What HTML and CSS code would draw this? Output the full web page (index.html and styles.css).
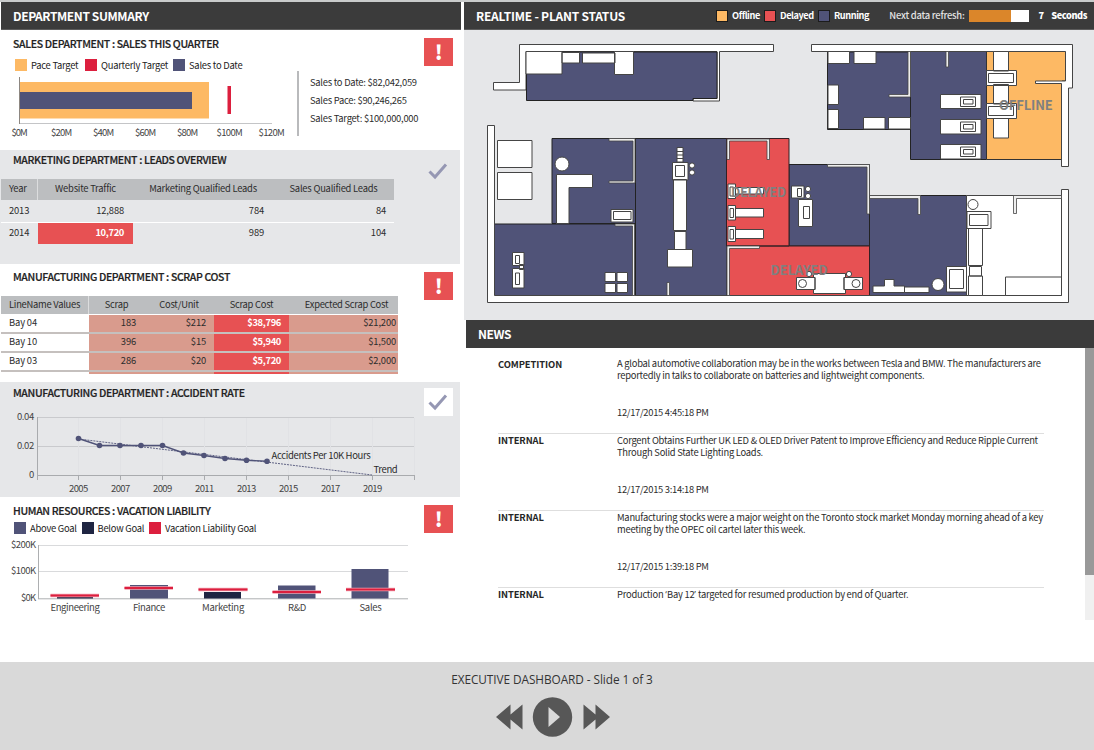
FILE: index.html
```
<!DOCTYPE html>
<html lang="en">
<head>
<meta charset="utf-8">
<title>Executive Dashboard</title>
<link rel="stylesheet" href="styles.css">
</head>
<body>
<div class="page">
<main class="board">
<div class="left">
  <h1 class="bar">DEPARTMENT SUMMARY</h1>

  <section class="panel sales">
    <h2>SALES DEPARTMENT : SALES THIS QUARTER</h2>
    <span class="flag alert">!</span>
    <div class="legend">
      <i class="sw orange"></i><span class="w49">Pace Target</span>
      <i class="sw crimson"></i><span class="w68">Quarterly Target</span>
      <i class="sw navy"></i><span>Sales to Date</span>
    </div>
    <div class="sales-body">
      <svg class="chart" width="297" height="70" viewBox="0 72 297 70">
        <path d="M19.500 77V124M19 123.500H272" stroke="#c4c5c7" fill="none"/>
        <rect x="20" y="82" width="189" height="36.500" fill="#fdb964"/>
        <rect x="20" y="92" width="172" height="17" fill="#505378"/>
        <path d="M19.500 77V124" stroke="#8d8781"/>
        <rect x="227.500" y="86" width="3.500" height="28" fill="#dc1f3e"/>
        <g class="axis mid">
          <text x="19.500" y="136" textLength="16">$0M</text><text x="61.500" y="136" textLength="21">$20M</text><text x="103.500" y="136" textLength="21">$40M</text><text x="145.500" y="136" textLength="21">$60M</text><text x="187.500" y="136" textLength="21">$80M</text><text x="229.500" y="136" textLength="26">$100M</text><text x="271.500" y="136" textLength="26">$120M</text>
        </g>
      </svg>
      <ul class="stats"><li>Sales to Date: $82,042,059</li><li>Sales Pace: $90,246,265</li><li>Sales Target: $100,000,000</li></ul>
    </div>
  </section>

  <section class="panel gray leads">
    <h2>MARKETING DEPARTMENT : LEADS OVERVIEW</h2>
    <span class="flag"><svg width="20" height="18" viewBox="0 0 20 18"><path d="M1.500 8.500L7 14L18 1.500" class="tick"/></svg></span>
    <div class="tbl">
      <div class="row head"><span>Year</span><span>Website Traffic</span><span>Marketing Qualified Leads</span><span>Sales Qualified Leads</span></div>
      <div class="row"><span>2013</span><span>12,888</span><span>784</span><span>84</span></div>
      <div class="row"><span>2014</span><span class="hot">10,720</span><span>989</span><span>104</span></div>
    </div>
  </section>

  <section class="panel scrap">
    <h2>MANUFACTURING DEPARTMENT : SCRAP COST</h2>
    <span class="flag alert">!</span>
    <div class="tbl">
      <div class="row head"><span>LineName Values</span><span>Scrap</span><span>Cost/Unit</span><span>Scrap Cost</span><span>Expected Scrap Cost</span></div>
      <div class="row"><span>Bay 04</span><span>183</span><span>$212</span><span class="hot">$38,796</span><span>$21,200</span></div>
      <div class="row"><span>Bay 10</span><span>396</span><span>$15</span><span class="hot">$5,940</span><span>$1,500</span></div>
      <div class="row"><span>Bay 03</span><span>286</span><span>$20</span><span class="hot">$5,720</span><span>$2,000</span></div>
      <div class="row stub"><span></span><span></span><span></span><span class="hot"></span><span></span></div>
    </div>
  </section>

  <section class="panel gray accidents">
    <h2>MANUFACTURING DEPARTMENT : ACCIDENT RATE</h2>
    <span class="flag white"><svg width="20" height="18" viewBox="0 0 20 18"><path d="M1.500 8.500L7 14L18 1.500" class="tick"/></svg></span>
    <svg class="chart" width="460" height="92" viewBox="0 405 460 92">
      <path d="M37 417.500H414M37 446.500H414" stroke="#c9cacd"/>
      <path d="M78.500 418V475M120.500 418V475M162.500 418V475M204.500 418V475M246.500 418V475M288.500 418V475M330.500 418V475M372.500 418V475M414.500 418V475" stroke="#e1e2e5"/>
      <path d="M37.500 417V480M37 475.500H415M78.500 475V480M120.500 475V480M162.500 475V480M204.500 475V480M246.500 475V480M288.500 475V480M330.500 475V480M372.500 475V480M414.500 475V480" stroke="#a9abae" fill="none"/>
      <path d="M78.500 439L372 475" stroke="#505378" stroke-dasharray="2 1" stroke-width=".9"/>
      <path d="M78.500 438.500L99.500 445.500H162.500L183.500 453L204 455.500L225 458.500L246.500 460.300L267 461.300" fill="none" stroke="#505378" stroke-width="1.400"/>
      <g fill="#505378"><circle cx="78.500" cy="438.500" r="2.800"/><circle cx="99.500" cy="445.500" r="2.800"/><circle cx="120" cy="445.500" r="2.800"/><circle cx="141" cy="445.500" r="2.800"/><circle cx="162.500" cy="445.500" r="2.800"/><circle cx="183.500" cy="453" r="2.800"/><circle cx="204" cy="455.500" r="2.800"/><circle cx="225" cy="458.500" r="2.800"/><circle cx="246.500" cy="460.300" r="2.800"/><circle cx="267" cy="461.300" r="2.800"/></g>
      <g class="axis end"><text x="34" y="420" textLength="17">0.04</text><text x="34" y="449" textLength="17">0.02</text><text x="34" y="478">0</text></g>
      <g class="axis mid"><text x="78.500" y="492" textLength="19">2005</text><text x="120.500" y="492" textLength="19">2007</text><text x="162.500" y="492" textLength="19">2009</text><text x="204.500" y="492" textLength="19">2011</text><text x="246.500" y="492" textLength="19">2013</text><text x="288.500" y="492" textLength="19">2015</text><text x="330.500" y="492" textLength="19">2017</text><text x="372.500" y="492" textLength="19">2019</text></g>
      <g class="label"><text x="271.500" y="459" textLength="99">Accidents Per 10K Hours</text><text x="373.500" y="473" textLength="24">Trend</text></g>
    </svg>
  </section>

  <section class="panel vacation">
    <h2>HUMAN RESOURCES : VACATION LIABILITY</h2>
    <span class="flag alert">!</span>
    <div class="legend">
      <i class="sw navy"></i><span class="w46">Above Goal</span>
      <i class="sw dark"></i><span class="w46">Below Goal</span>
      <i class="sw crimson"></i><span>Vacation Liability Goal</span>
    </div>
    <svg class="chart" width="460" height="86" viewBox="0 536 460 86">
      <path d="M39 545.500H408M39 571.500H408" stroke="#d9dadc"/>
      <path d="M38.500 545V599M38 598.800H408" stroke="#adafb1" fill="none"/>
      <rect x="57" y="596" width="36" height="2.500" fill="#1f2542"/><rect x="130" y="585" width="38" height="13.500" fill="#505378"/><rect x="204" y="592" width="37" height="6.500" fill="#1f2542"/><rect x="278" y="585.500" width="37.500" height="13" fill="#505378"/><rect x="351.500" y="569" width="37" height="29.500" fill="#505378"/>
      <g stroke="#f3a0ae" stroke-width="3.400"><path d="M50.500 595.500H99M124.500 588H173M198.500 589.500H247.500M272.500 592H321M346 589.500H395"/></g>
      <g stroke="#dc1f3e" stroke-width="2"><path d="M50.500 595.500H99M124.500 588H173M198.500 589.500H247.500M272.500 592H321M346 589.500H395"/></g>
      <g class="axis end"><text x="36" y="548" textLength="25">$200K</text><text x="36" y="574" textLength="25">$100K</text><text x="36" y="601" textLength="15">$0K</text></g>
      <g class="axis mid"><text x="75" y="611" textLength="49">Engineering</text><text x="149" y="611" textLength="32">Finance</text><text x="223" y="611" textLength="42">Marketing</text><text x="297" y="611" textLength="18">R&amp;D</text><text x="370.500" y="611" textLength="22">Sales</text></g>
    </svg>
  </section>
</div>

<div class="right">
  <header class="bar status">
    <h1>REALTIME - PLANT STATUS</h1>
    <div class="keys"><i class="sw orange"></i><span class="k1">Offline</span><i class="sw red"></i><span class="k2">Delayed</span><i class="sw navy"></i><span>Running</span></div>
    <div class="refresh"><span class="nd">Next data refresh:</span><span class="meter"><i style="width:70%"></i></span><b>7</b><b class="sec">Seconds</b></div>
  </header>
  <svg class="plan" width="630" height="290" viewBox="464 30 630 290">
    <!-- upper left building -->
    <path class="wall" d="M519.500 44.500H773.500V51.500H719.500V101H693V98.500H717V51.500H526V90H493.500V82.500H519.500Z"/>
    <path class="run" d="M526.500 52H717V98.500H693V100.500H526.500Z"/>
    <g class="eq"><path d="M526 51.500H562V74H526ZM562 52.500H579.500V63H562ZM582.500 53H615V63H582.500ZM614.500 51.500H633.500V74.500H614.500Z"/></g>
    <!-- upper right building -->
    <path class="run" d="M827.500 52H910.500V129.500H827.500ZM910.500 51H986.500V159.500H910.500Z"/>
    <path class="off" d="M986.500 51H1065.500V81H1062V159.500H986.500Z"/>
    <path class="wall" d="M811.500 44.500H1072.500V88H1068.500V166.500H1061.500V83.500H1035.500V81H1065.500V51.500H811.500Z"/>
    <path class="thin" d="M908 51.500H910.500V97H889V94.500H908ZM946 51.500H948.500V67H946Z"/>
    <g class="eq"><path d="M828 51.500H849.500V63.500H828ZM854 51.500H876V63.500H854ZM828 85H838.500V104.500H828ZM828 109.500H838.500V128.500H828ZM863.500 117.500H885V129H863.500ZM888.500 117.500H910.500V129H888.500Z"/>
    <path d="M940.500 94.500H981V108.500H940.500ZM960.500 97H975.500V106.500H960.500ZM963.500 99.500H973V104H963.500ZM940.500 119.500H981V134H940.500ZM960.500 122H975.500V131.500H960.500ZM963.500 124.500H973V129H963.500ZM940.500 144.500H981V159H940.500ZM960.500 147H975.500V156.500H960.500ZM963.500 149.500H973V154H963.500Z"/>
    <path d="M993.500 51.500H1008.500V71H993.500ZM993.500 84.500H1008.500V104H993.500ZM993.500 118.500H1008.500V138H993.500ZM986.500 70.500H1016.500V85.500H986.500ZM988.500 73.500H1013.500V82.500H988.500ZM986.500 103.500H1016.500V118.500H986.500ZM988.500 106.500H1013.500V115.500H988.500Z"/></g>
    <!-- lower building rooms -->
    <path class="run" d="M552 138.500H635.500V223.500H552ZM494.500 224H634V295.500H494.500ZM635.500 138.500H727V295.500H635.500ZM789 164.500H869.500V246H789ZM869.500 195.500H966.500V295.500H869.500Z"/>
    <path class="delay" d="M726.500 138.500H789V246H726.500ZM727.500 246H869.500V295.500H727.500Z"/>
    <path class="eq" d="M966.500 195.500H1061.500V295.500H966.500Z"/>
    <path class="wall" d="M487.500 125.500H494.500V295.500H1061.500V189.500H1068.500V302.500H487.500Z"/>
    <path class="thin" d="M609 138.500H635V183H609V181H633V141H609ZM615 224H634.500V295.500H632.500V226H615ZM667 282.500H669.500V295.500H667ZM727 139H769.500V159.500H767V141H729.500V159.500H727ZM827.500 164.500H869.500V214H867V167H827.500ZM727 246H759.500V248.500H729.500V295.500H727ZM869.500 195.500H920.500V214.500H918V198.500H869.500ZM1013.500 195.500H1061.500V198.500H1016.500V213.500H1013.500Z"/>
    <g class="eq">
      <path d="M497.500 140.500H532V167.500H497.500ZM497.500 172.500H532V199.500H497.500Z"/>
      <circle cx="562" cy="164" r="7"/>
      <path d="M556.500 174.500H592.500V187.500H569V223.500H556.500ZM611 209.500H633V222H611ZM613.500 211.500H631V219.500H613.500Z"/>
      <path d="M512.500 252.500H524V265.500H512.500ZM515.500 255.500H519.500V263.500H515.500ZM512.500 268.500H524V288H512.500ZM515.500 273H519.500V284.500H515.500ZM519.500 264.500H523.500V269.500H519.500Z"/>
      <path d="M605 272.500H615.500V281.500H605ZM617 272.500H627.500V281.500H617ZM605 283.500H615.500V292.500H605ZM617 283.500H627.500V292.500H617Z"/>
      <path d="M677 147.500H683V162H677ZM677 151.500H683M677 155H683M677 158.500H683M672.500 162.500H688V180H672.500ZM675.500 165.500H684.500V176.500H675.500ZM673.500 179.500H686.500V230.500H673.500ZM674.500 231.500H686V249.500H674.500ZM667.500 249.500H692.500V267H667.500Z"/>
      <circle cx="692" cy="165.500" r="2.600"/><circle cx="692" cy="172.500" r="2.600"/>
      <path d="M728 184H735.500V198.500H728ZM730 187H733.500V196H730ZM735.500 187.500H763.500V194H735.500ZM728 205.500H735.500V220H728ZM730 208.500H733.500V217.500H730ZM735.500 208.500H763.500V217H735.500ZM728 226.500H735.500V241.500H728ZM730 229.500H733.500V239H730ZM735.500 229.500H763.500V238.500H735.500Z"/>
      <path d="M791.500 186H804V198H791.500ZM797.500 188.500H801.500V196.500H797.500ZM798.500 199.500H812.500V226.500H798.500ZM803.500 206.500H809.500V218.500H803.500Z"/>
      <circle cx="808" cy="189" r="2.600"/><circle cx="808" cy="196" r="2.600"/>
      <path d="M796.500 277.500H815V289.500H796.500ZM844 277.500H862.500V289.500H844ZM813.500 273.500H845.500V277.500H844V289.500H845.500V293.500H813.500V289.500H815V277.500H813.500Z"/>
      <circle cx="802.500" cy="283.500" r="4"/><circle cx="856" cy="283.500" r="4"/><circle cx="809" cy="274" r="2.600"/><circle cx="849" cy="274" r="2.600"/>
      <path d="M873 286H884.500V279.500H894V286H904.500V292.500H873ZM904.500 287H929V292.500H904.500ZM946.500 266.500H966.500V292H946.500ZM949.500 269.500H963.500V288.500H949.500Z"/>
      <circle cx="938" cy="284.500" r="6"/><circle cx="973" cy="204.500" r="5"/>
      <path d="M967 211.500H991V228.500H967ZM969.500 214.500H988V225.500H969.500ZM968.500 228.500H982.500V265.500H968.500ZM969.500 266.500H981.500V276H969.500ZM968.500 276H982.500V295.500H968.500ZM1005.500 277H1061.500V295.500H1005.500Z"/>
    </g>
    <g class="tag"><text x="999" y="110" textLength="53.500">OFFLINE</text><text x="731" y="197" textLength="55">DELAYED</text><text x="770.500" y="275" textLength="57">DELAYED</text></g>
  </svg>

  <div class="news">
    <h1 class="bar">NEWS</h1>
    <div class="news-body">
      <div class="feed">
        <article><h3>COMPETITION</h3><div><p>A global automotive collaboration may be in the works between Tesla and BMW. The manufacturers are<br>reportedly in talks to collaborate on batteries and lightweight components.</p><time>12/17/2015 4:45:18 PM</time></div></article>
        <article><h3>INTERNAL</h3><div><p>Corgent Obtains Further UK LED &amp; OLED Driver Patent to Improve Efficiency and Reduce Ripple Current<br>Through Solid State Lighting Loads.</p><time>12/17/2015 3:14:18 PM</time></div></article>
        <article><h3>INTERNAL</h3><div><p>Manufacturing stocks were a major weight on the Toronto stock market Monday morning ahead of a key<br>meeting by the OPEC oil cartel later this week.</p><time>12/17/2015 1:39:18 PM</time></div></article>
        <article><h3>INTERNAL</h3><div><p>Production <span class="q">‘</span>Bay 12<span class="q">’</span> targeted for resumed production by end of Quarter.</p></div></article>
      </div>
      <div class="scroll"><i></i></div>
    </div>
  </div>
</div>
</main>

<footer class="player">
  <p>EXECUTIVE DASHBOARD - Slide 1 of 3</p>
  <svg width="114" height="40" viewBox="0 0 114 40" fill="#575757">
    <path d="M0 20L14.500 7.500V17.500L26.500 7.500V32.500L14.500 22.500V32.500Z"/>
    <circle cx="56.500" cy="20" r="19.700"/><path d="M52.500 10L64 20L52.500 30Z" fill="#d9d9d9"/>
    <path d="M114 20L99.500 7.500V17.500L87.500 7.500V32.500L99.500 22.500V32.500Z"/>
  </svg>
</footer>
</div>
</body>
</html>
```
FILE: styles.css
```
* { box-sizing: border-box; margin: 0; padding: 0; }
body { width: 1094px; height: 750px; overflow: hidden; background: #fff; color: #2c2c2c; font: 9.4px/12px "Noto Sans CJK SC", "Open Sans", sans-serif; letter-spacing: -.25px; }
.page { display: flex; flex-direction: column; height: 750px; }
.board { display: flex; gap: 3px; height: 662px; border-top: 2px solid #c9cbcb; }
.left { width: 461px; padding-left: 1px; }
.right { width: 630px; }
svg { display: block; }
i { font-style: normal; }

.bar { height: 28px; background: #3b3b3b; color: #fff; font-size: 12px; line-height: 27px; font-weight: 700; letter-spacing: -.4px; padding-left: 12px; border-bottom: 1px solid #5c5c5c; }
.panel { position: relative; width: 459px; }
.gray { background: #e6e7e9; width: 460px; margin-left: -1px; padding-left: 1px; }
h2 { color: #222; font-size: 10.500px; line-height: 14px; font-weight: 500; letter-spacing: -.35px; -webkit-text-stroke: .2px #222; padding-left: 12px; white-space: nowrap; }
.chart { margin-left: -1px; }
.chart text { font-size: 9.5px; fill: #444; }
.mid { text-anchor: middle; }
.end { text-anchor: end; }
.axis text { fill: #444; }
.label text { fill: #2c2c2c; }

.flag { position: absolute; left: 423px; width: 29px; height: 28px; display: flex; align-items: center; justify-content: center; }
.gray .flag { left: 424px; }
.alert { background: #e75153; color: #fff; font-size: 20px; line-height: 26px; font-weight: 900; }
.white { background: #fff; }
.tick { fill: none; stroke: #9597b3; stroke-width: 3; }

.legend { display: flex; align-items: center; height: 12px; padding-left: 14px; gap: 4px; color: #1c1c1c; white-space: nowrap; }
.sw { width: 12px; height: 12px; flex: none; }
.orange { background: #fdb964; }
.crimson { background: #dc1f3e; }
.navy { background: #505378; }
.dark { background: #1f2542; }
.red { background: #e75153; }
.w49 { width: 50px; }
.w68 { width: 68px; }
.w46 { width: 47.5px; }

.sales { height: 120px; padding-top: 7px; }
.sales .flag { top: 8px; }
.sales .legend { margin-top: 8px; letter-spacing: -.24px; }
.sales-body { display: flex; }
.sales-body .chart { margin-top: 1px; flex: none; }
.stats { list-style: none; margin: 0; height: 65px; border-left: 2px solid #b9babc; padding: 2px 0 0 11px; line-height: 18px; }

.leads { height: 114px; padding-top: 3px; }
.leads .flag { top: 8px; }
.leads .flag svg, .white svg { position: relative; left: -1px; }
.white svg { top: 1px; }
.tbl { margin-top: 12px; }
.row { display: grid; }
.leads .row { grid-template-columns: 37px 95px 140px 121px; width: 393px; height: 22px; line-height: 19px; text-align: right; letter-spacing: -.15px; }
.leads .row span { padding-right: 9px; }
.leads .row span:first-child { text-align: left; padding: 0 0 0 8px; }
.leads .row.head { background: #bcbec0; height: 21px; line-height: 19px; letter-spacing: -.22px; }
.leads .head span { text-align: center; padding: 0; }
.leads .row:nth-child(2) { border-bottom: 1px solid #fff; height: 23px; line-height: 21px; }
.head span:first-child { border-right: 1px solid #dcddde; }
.hot { background: #e75153; color: #fff; font-weight: 700; letter-spacing: -.35px; }
.leads .hot { height: 21px; }
.leads .row span:last-child { padding-right: 8px; }
.leads .head span:last-child { padding-right: 0; }

.scrap { height: 118px; padding-top: 6px; }
.scrap .flag { top: 8px; }
.scrap .row { grid-template-columns: 88px 55px 70px 75px 109px; width: 397px; height: 19px; line-height: 15px; text-align: right; letter-spacing: -.15px; }
.scrap .row span { background: #d99b8d; padding-right: 8px; border-bottom: 2px solid #c5c0be; }
.scrap .row span:first-child { background: #fff; text-align: left; padding-left: 8px; }
.scrap .row span:last-child { padding-right: 2px; }
.scrap .row .hot { background: #e75153; letter-spacing: -.35px; }
.scrap .row.head { background: #bcbec0; border-bottom: 1px solid #fff; line-height: 17px; letter-spacing: -.26px; }
.scrap .row.head span { background: none; border-bottom: 0; text-align: center; padding: 0; }
.scrap .row.head span:first-child { text-align: left; padding-left: 8px; background: none; }
.scrap .row.head span:last-child { padding-left: 6px; }
.scrap .row.stub { height: 2px; }
.scrap .row.stub span { border: 0; height: 2px; }

.accidents { height: 115px; padding-top: 4px; }
.accidents .flag { top: 6px; }
.accidents .chart { margin-top: 5px; }
.vacation { height: 124px; padding-top: 7px; }
.vacation .flag { top: 8px; }
.vacation .legend { padding-left: 13px; margin-top: 4px; }
.vacation .chart { margin-top: 2px; }

.status { display: flex; align-items: center; padding: 0 7px 0 12px; }
.status h1 { font-size: 12px; width: 240px; white-space: nowrap; letter-spacing: -.22px; }
.keys { display: flex; align-items: center; gap: 4px; font-size: 9.2px; letter-spacing: -.42px; }
.keys .sw { border: 1px solid #1c1c1c; }
.k1 { width: 28px; }
.k2 { width: 34px; }
.refresh { display: flex; align-items: center; margin-left: auto; font-size: 9.2px; letter-spacing: -.4px; white-space: nowrap; }
.nd { color: #e3e3e3; margin-right: 5px; font-weight: 500; font-size: 9.4px; letter-spacing: -.22px; }
.meter { width: 60px; height: 12px; background: #fff; margin-right: 9px; }
.meter i { display: block; height: 12px; background: #db862a; }
.sec { margin-left: 7.5px; }

.plan { background: #e6e7e9; }
.plan path, .plan circle { stroke: #454545; stroke-width: 1; }
.plan .wall, .eq, .plan .thin { fill: #fff; }
.plan .thin { fill: #eee; stroke-width: .8; }
.plan .run { fill: #505378; stroke: #222; }
.plan .off { fill: #fdb964; stroke: #333; }
.plan .delay { fill: #e75153; stroke: #332025; }
.tag text { fill: #808080; font-size: 13px; font-weight: 700; }

.news { padding-left: 2px; }
.news .bar { border: 0; line-height: 28px; }
.news-body { display: flex; justify-content: space-between; height: 272px; overflow: hidden; }
.feed { width: 546px; margin-left: 32px; padding-top: 9px; }
article { display: grid; grid-template-columns: 119px 1fr; height: 77px; border-bottom: 1px solid #dedede; white-space: nowrap; }
article:nth-child(3) { height: 76.500px; }
article:last-child { border: 0; }
article p { height: 24px; }
article time { display: block; margin-top: 25px; letter-spacing: -.3px; }
h3 { font-size: 9.4px; line-height: 12px; font-weight: 700; color: #262626; letter-spacing: -.1px; }
article:first-child h3 { line-height: 14px; }
.q { font-family: "Open Sans", sans-serif; letter-spacing: .2px; }
.scroll { width: 9px; background: #f0f0f0; }
.scroll i { display: block; height: 227px; background: #999; }

.player { height: 88px; background: #d9d9d9; display: flex; flex-direction: column; align-items: center; padding: 9px 0 0 10px; }
.player p { font: 400 11.8px/17px "Open Sans", "Noto Sans", sans-serif; color: #333; letter-spacing: -.06px; }
.player svg { margin: 9px 0 0 2px; }
```
